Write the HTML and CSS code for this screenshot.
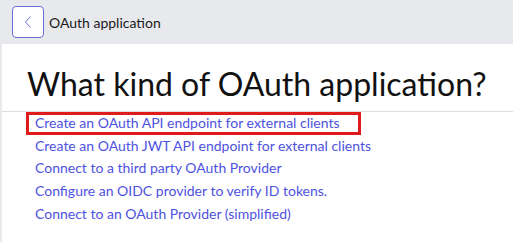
FILE: index.html
```html
<!DOCTYPE html>
<html lang="en">
<head>
<meta charset="utf-8">
<title>OAuth application</title>
<link rel="stylesheet" href="styles.css">
</head>
<body>
<header class="topbar">
  <button class="back" type="button" aria-label="Back">
    <svg width="8" height="12" viewBox="0 0 8 12"><path d="M6.5 0.5 L1.5 6 L6.5 11.5" fill="none" stroke="#6b6ed6" stroke-width="1"/></svg>
  </button>
  <span class="title">OAuth application</span>
</header>
<main class="page">
  <h1 class="heading">What kind of OAuth application?</h1>
  <nav class="links">
    <a class="link highlight" href="#">Create an OAuth API endpoint for external clients</a>
    <a class="link" href="#">Create an OAuth JWT API endpoint for external clients</a>
    <a class="link" href="#">Connect to a third party OAuth Provider</a>
    <a class="link" href="#">Configure an OIDC provider to verify ID tokens.</a>
    <a class="link" href="#">Connect to an OAuth Provider (simplified)</a>
  </nav>
</main>
</body>
</html>
```
FILE: styles.css
```css
html, body {
  margin: 0;
  padding: 0;
  height: 100%;
}
body {
  font-family: Lato, "Noto Sans", sans-serif;
  background: #e8e9ed;
  color: #161616;
  display: flex;
  flex-direction: column;
}
.topbar {
  height: 44px;
  display: flex;
  align-items: center;
  padding-left: 12px;
  gap: 5px;
  box-sizing: border-box;
}
.back {
  width: 32px;
  height: 32px;
  box-sizing: border-box;
  border: 1px solid #6b6ed6;
  border-radius: 4px;
  background: #fff;
  padding: 0;
  display: flex;
  align-items: center;
  justify-content: center;
}
.title {
  font-size: 14px;
  color: #1a1a1a;
}
.page {
  flex: 1;
  background: #fff;
  margin-left: 2px;
}
.heading {
  margin: 0;
  padding: 15px 0 0 25px;
  font-size: 32px;
  font-weight: 400;
  line-height: 50px;
  height: 52px;
  white-space: nowrap;
  border-bottom: 1px solid #dedede;
  color: #111;
}
.links {
  display: flex;
  flex-direction: column;
  align-items: flex-start;
  padding-left: 24px;
}
.link {
  display: block;
  font-size: 14px;
  line-height: 16.7px;
  padding: 0 6px;
  border: 3px solid transparent;
  color: #4e52e0;
  text-decoration: none;
}
.highlight {
  border-color: #e01b1b;
  padding-right: 18px;
}
```
